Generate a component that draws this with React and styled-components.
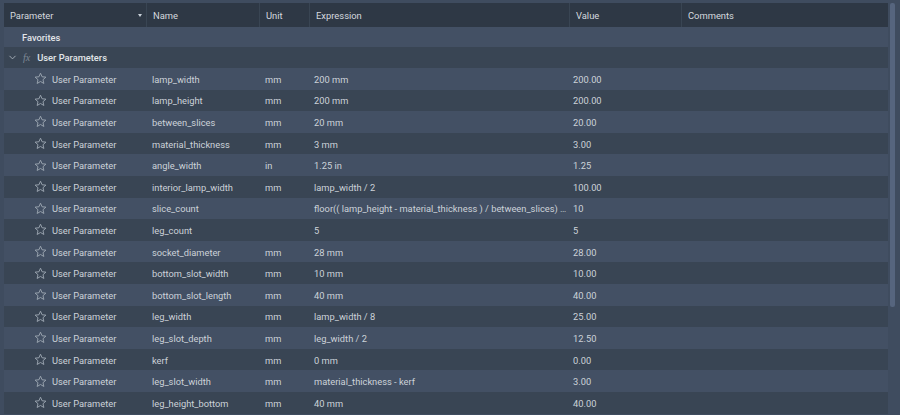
import styled, { createGlobalStyle } from "styled-components";
import { ChevronDown } from "lucide-react";

const GlobalStyle = createGlobalStyle`
  html, body {
    margin: 0;
    height: 100%;
    overflow: hidden;
    background-color: #3f4c5f;
  }
`;

const COLUMNS = "143px 113px 50px 260px 112px 206px";

const Page = styled.div`
  width: 900px;
  height: 415px;
  overflow: hidden;
  display: flex;
  padding: 3px 4px 0 4px;
  box-sizing: border-box;
  gap: 2px;
  background-color: #3f4c5f;
  font-family: Roboto, sans-serif;
  font-size: 9.3px;
  color: #ccd2d9;
`;

const Table = styled.div`
  width: 884px;
  flex-shrink: 0;
`;

const HeaderRow = styled.div`
  display: grid;
  grid-template-columns: ${COLUMNS};
  height: 24px;
  background-color: #2e3845;
`;

const HeaderCell = styled.div`
  display: flex;
  align-items: center;
  justify-content: space-between;
  padding: 0 4px 0 6px;
  border-right: 1px solid #394553;
  color: #d5d9df;
  font-size: 9.4px;

  &:last-child {
    border-right: 0;
  }
`;

const SortArrow = styled.span`
  width: 0;
  height: 0;
  border-left: 2.5px solid transparent;
  border-right: 2.5px solid transparent;
  border-top: 3px solid #c9d0d8;
`;

const GroupRow = styled.div`
  display: flex;
  align-items: center;
  height: ${(p) => p.$height}px;
  background-color: ${(p) => (p.$dark ? "#394554" : "#435064")};
  font-weight: 500;
  color: #e2e5e9;
`;

const FavoritesLabel = styled.span`
  margin-left: 18px;
`;

const Toggle = styled(ChevronDown)`
  margin-left: 3px;
  color: #aab2bc;
`;

const Fx = styled.span`
  margin: 0 7px 0 5px;
  font-family: "Liberation Serif", serif;
  font-style: italic;
  font-weight: 400;
  font-size: 10px;
  color: #7f8996;
`;

const Row = styled.div`
  display: grid;
  grid-template-columns: ${COLUMNS};
  align-items: center;
  height: 21.6px;
  padding-top: 1px;
  box-sizing: border-box;
  background-color: ${(p) => (p.$dark ? "#394554" : "#435064")};
`;

const TypeCell = styled.div`
  display: flex;
  align-items: center;
  padding-left: 30px;
  gap: 5px;

  svg {
    margin-top: -1px;
  }
`;

const Cell = styled.div`
  padding-left: 5px;
  white-space: nowrap;
  overflow: hidden;
`;

const ExpressionCell = styled(Cell)`
  padding-left: 4px;
  padding-right: 2px;
  text-overflow: ellipsis;
`;

const ValueCell = styled(Cell)`
  padding-left: 3px;
`;

const ScrollTrack = styled.div`
  width: 6px;
  height: 412px;
  background-color: #3f4c5f;
`;

const ScrollThumb = styled.div`
  width: 5px;
  height: 304px;
  background-color: #56657e;
  border-radius: 2px;
`;

const StarIcon = () => (
  <svg width="13" height="13" viewBox="0 0 24 24" fill="none" stroke="#98a2ae" strokeWidth="1.8" strokeLinejoin="miter">
    <path d="M12 2.2l2.9 6.6 7.1.7-5.4 4.7 1.6 7-6.2-3.7-6.2 3.7 1.6-7L2 9.5l7.1-.7z" />
  </svg>
);

const params = [
  ["lamp_width", "mm", "200 mm", "200.00"],
  ["lamp_height", "mm", "200 mm", "200.00"],
  ["between_slices", "mm", "20 mm", "20.00"],
  ["material_thickness", "mm", "3 mm", "3.00"],
  ["angle_width", "in", "1.25 in", "1.25"],
  ["interior_lamp_width", "mm", "lamp_width / 2", "100.00"],
  ["slice_count", "", "floor(( lamp_height - material_thickness ) / between_slices) - 1", "10"],
  ["leg_count", "", "5", "5"],
  ["socket_diameter", "mm", "28 mm", "28.00"],
  ["bottom_slot_width", "mm", "10 mm", "10.00"],
  ["bottom_slot_length", "mm", "40 mm", "40.00"],
  ["leg_width", "mm", "lamp_width / 8", "25.00"],
  ["leg_slot_depth", "mm", "leg_width / 2", "12.50"],
  ["kerf", "mm", "0 mm", "0.00"],
  ["leg_slot_width", "mm", "material_thickness - kerf", "3.00"],
  ["leg_height_bottom", "mm", "40 mm", "40.00"],
];

const App = () => (
  <Page>
    <GlobalStyle />
    <Table>
      <HeaderRow>
        <HeaderCell>
          Parameter
          <SortArrow />
        </HeaderCell>
        <HeaderCell>Name</HeaderCell>
        <HeaderCell>Unit</HeaderCell>
        <HeaderCell>Expression</HeaderCell>
        <HeaderCell>Value</HeaderCell>
        <HeaderCell>Comments</HeaderCell>
      </HeaderRow>
      <GroupRow $height={20}>
        <FavoritesLabel>Favorites</FavoritesLabel>
      </GroupRow>
      <GroupRow $height={21} $dark>
        <Toggle size={11} />
        <Fx>fx</Fx>
        User Parameters
      </GroupRow>
      {params.map((p, i) => (
        <Row key={p[0]} $dark={i % 2 === 1}>
          <TypeCell>
            <StarIcon />
            User Parameter
          </TypeCell>
          <Cell>{p[0]}</Cell>
          <Cell>{p[1]}</Cell>
          <ExpressionCell>{p[2]}</ExpressionCell>
          <ValueCell>{p[3]}</ValueCell>
          <Cell />
        </Row>
      ))}
    </Table>
    <ScrollTrack>
      <ScrollThumb />
    </ScrollTrack>
  </Page>
);

export default App;
